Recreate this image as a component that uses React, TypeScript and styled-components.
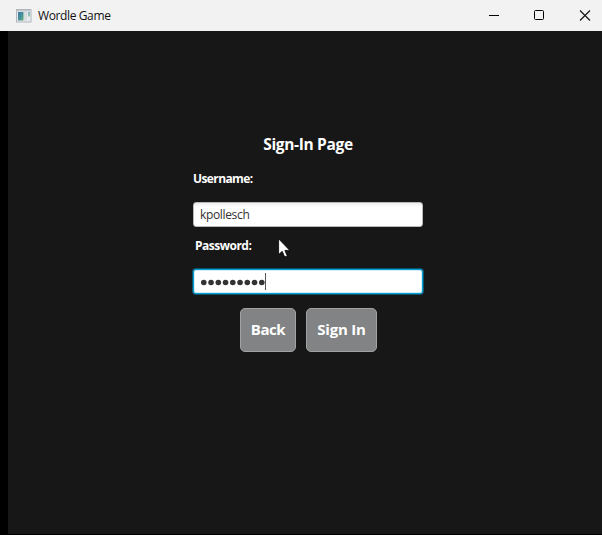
import React from "react";
import styled, { createGlobalStyle } from "styled-components";

const GlobalStyle = createGlobalStyle`
  * { box-sizing: border-box; }
  html, body { margin: 0; padding: 0; background: #000; overflow: hidden; }
  body { font-family: "Segoe UI", "Open Sans", "Noto Sans", sans-serif; }
`;

const Window = styled.div`
  width: 602px;
  height: 535px;
  display: flex;
  flex-direction: column;
  background: #000;
`;

const TitleBar = styled.header`
  height: 31px;
  flex: none;
  display: flex;
  align-items: center;
  padding-left: 16px;
  background: #f2f2f2;
  color: #111;
`;

const AppTitle = styled.span`
  flex: 1;
  margin-left: 6px;
  font-size: 12px;
  line-height: 16px;
  letter-spacing: -0.38px;
`;

const WindowControls = styled.div`
  display: flex;
  gap: 34px;
  padding-right: 11px;

  svg { display: block; }
`;

const Content = styled.main`
  width: 594px;
  height: 503px;
  margin-left: 8px;
  padding: 102px 0 0 185px;
  background: #171717;
`;

const Form = styled.form`
  width: 230px;
  display: flex;
  flex-direction: column;
`;

const Heading = styled.h1`
  margin: 0;
  height: 22px;
  font-size: 15.5px;
  font-weight: 700;
  line-height: 22px;
  letter-spacing: -0.34px;
  text-align: center;
  color: #fff;
`;

const Label = styled.label<{ $top: number; $indent?: number; $tracking: number }>`
  display: block;
  height: 16px;
  margin: ${(p) => p.$top}px 0 15px ${(p) => p.$indent ?? 0}px;
  font-size: 12px;
  font-weight: 700;
  line-height: 16px;
  letter-spacing: ${(p) => p.$tracking}px;
  color: #fff;
`;

const Field = styled.div<{ $focused?: boolean }>`
  height: 25px;
  display: flex;
  align-items: center;
  padding-left: ${(p) => (p.$focused ? 7 : 6)}px;
  border: 1px solid ${(p) => (p.$focused ? "#039ed3" : "#b9b9b9")};
  border-radius: 3px;
  background: ${(p) => (p.$focused ? "#fff" : "linear-gradient(#ededed, #fff 4px)")};
  box-shadow: ${(p) =>
    p.$focused ? "0 0 0 1px rgba(3, 158, 211, 0.45), inset 0 0 0 1px #d4eef7" : "none"};
  font-size: 12px;
  line-height: 16px;
  letter-spacing: -0.34px;
  color: #323232;
`;

const Caret = styled.span`
  width: 1px;
  height: 17px;
  background: #555;
`;

const Actions = styled.div`
  display: flex;
  gap: 10px;
  margin: 14px 0 0 47px;
`;

const Button = styled.button<{ $width: number; $tracking: number }>`
  width: ${(p) => p.$width}px;
  height: 44px;
  padding: 0 0 2px;
  border: 1px solid #a2a2a2;
  border-radius: 5px;
  background: #818384;
  color: #fff;
  font: 700 15px/20px "Segoe UI", "Open Sans", "Noto Sans", sans-serif;
  letter-spacing: ${(p) => p.$tracking}px;
  white-space: nowrap;
`;

const Pointer = styled.svg`
  position: absolute;
  left: 278px;
  top: 238px;
`;

function AppIcon() {
  return (
    <svg width="16" height="14" viewBox="0 0 16 14">
      <defs>
        <linearGradient id="pane" x1="0" y1="0" x2="1" y2="1">
          <stop offset="0" stopColor="#397ca5" />
          <stop offset="0.5" stopColor="#458f9b" />
          <stop offset="1" stopColor="#67ad79" />
        </linearGradient>
        <linearGradient id="side" x1="0" y1="0" x2="0" y2="1">
          <stop offset="0" stopColor="#8db4d6" />
          <stop offset="1" stopColor="#8fc99f" />
        </linearGradient>
      </defs>
      <rect x="0.5" y="0.5" width="14.5" height="12.5" fill="#e9ecee" stroke="#b2b7bc" />
      <rect x="1" y="1" width="13.5" height="1.5" fill="#c4c9cd" />
      <rect x="2" y="3" width="5.5" height="8.5" fill="url(#pane)" />
      <rect x="8" y="3" width="3" height="8.5" fill="#d9dcde" />
      <rect x="12" y="3" width="2" height="4.5" fill="url(#side)" />
    </svg>
  );
}

export default function App() {
  return (
    <>
      <GlobalStyle />
      <Window>
        <TitleBar>
          <AppIcon />
          <AppTitle>Wordle Game</AppTitle>
          <WindowControls>
            <svg width="12" height="12" viewBox="0 0 12 12">
              <path d="M2 5.5h10" stroke="#000" />
            </svg>
            <svg width="12" height="12" viewBox="0 0 12 12">
              <rect x="1.5" y="0.5" width="9" height="9" rx="1" fill="none" stroke="#000" />
            </svg>
            <svg width="12" height="12" viewBox="0 0 12 12">
              <path d="M1 0.5l10 10M11 0.5L1 10.5" stroke="#111" strokeWidth="1.1" />
            </svg>
          </WindowControls>
        </TitleBar>
        <Content>
          <Form>
            <Heading>Sign-In Page</Heading>
            <Label $top={16} $tracking={-0.6}>Username:</Label>
            <Field>kpollesch</Field>
            <Label $top={11} $indent={2} $tracking={-0.5}>Password:</Label>
            <Field $focused>
              <svg width="64" height="8" viewBox="0 0 64 8">
                {Array.from({ length: 9 }, (_, i) => (
                  <circle key={i} cx={2.8 + i * 7.25} cy="4.5" r="2.8" fill="#333" />
                ))}
              </svg>
              <Caret />
            </Field>
            <Actions>
              <Button type="button" $width={56} $tracking={-0.45}>Back</Button>
              <Button type="button" $width={71} $tracking={-0.2}>Sign In</Button>
            </Actions>
          </Form>
        </Content>
      </Window>
      <Pointer width="13" height="20" viewBox="0 0 13 20">
        <path
          d="M0.6 0.8V16.6L4.2 13.3L6.7 19L9.3 17.9L6.9 12.4H11.8Z"
          fill="#fff"
          stroke="#000"
          strokeWidth="0.8"
        />
      </Pointer>
    </>
  );
}
